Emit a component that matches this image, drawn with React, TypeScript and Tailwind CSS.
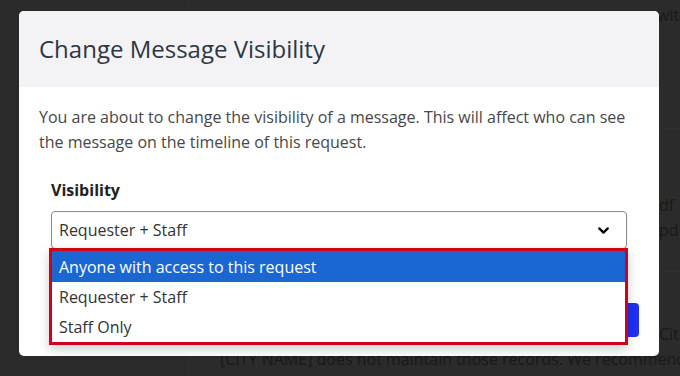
import { ChevronDown } from 'lucide-react';

const options = ['Anyone with access to this request', 'Requester + Staff', 'Staff Only'];

export default function App() {
  return (
    <div className="relative h-[376px] w-[680px] overflow-hidden bg-[#2b2b2b] font-['Open_Sans',sans-serif]">
      {/* page behind the dialog */}
      <div className="flex h-full">
        <div className="w-[186px] shrink-0 border-r border-[#262626] bg-[#2a2a2a]" />
        <div className="flex-1 text-[16px] leading-[25px] text-[#191919]">
          <div className="pl-[471px] pt-[3px] whitespace-nowrap">with</div>
          <div className="mt-[100px] border-t border-[#2f2f2f]" />
          <div className="mt-[64px] pl-[473px] whitespace-nowrap">df</div>
          <div className="pl-[473px] whitespace-nowrap">pd</div>
          <div className="mt-[28px] border-t border-[#2f2f2f]" />
          <div className="mt-[50px] pl-[473px] whitespace-nowrap">Cit</div>
          <div className="pl-[34px] whitespace-nowrap">[CITY NAME] does not maintain those records. We recommend</div>
        </div>
      </div>

      {/* dialog */}
      <div className="absolute left-[19px] top-[11px] flex h-[345px] w-[640px] flex-col rounded-[5px] bg-white">
        <div className="flex h-[76px] items-center rounded-t-[5px] bg-[#f3f3f5] px-[20px]">
          <h2 className="text-[24px] leading-[32px] text-[#2e3643]">Change Message Visibility</h2>
        </div>
        <div className="px-[20px] pt-[18px]">
          <p className="text-[16px] leading-[25px] text-[#474747]">
            You are about to change the visibility of a message. This will affect who can see the message on the
            timeline of this request.
          </p>
          <div className="mt-[24px] px-[12px]">
            <label className="block text-[16px] font-bold leading-[22px] text-[#222]">Visibility</label>
            <div className="relative mt-[10px]">
              <div className="flex h-[38px] items-center justify-between rounded-[4px] border border-[#8c8c8c] pl-[7px] pr-[14px] shadow-[0_1px_2px_rgba(0,0,0,0.12)]">
                <span className="text-[16px] text-[#333]">Requester + Staff</span>
                <ChevronDown size={17} strokeWidth={3.2} className="text-black" />
              </div>
              <ul className="absolute left-[-2px] right-[-1px] top-[37px] z-10 border-[3px] border-[#d0021b] bg-white shadow-[0_4px_10px_rgba(0,0,0,0.2)]">
                {options.map((o, i) => (
                  <li
                    key={o}
                    className={
                      i === 0
                        ? 'flex h-[31px] items-center bg-[#1a66d2] pl-[7px] text-[16px] text-white'
                        : 'flex h-[30px] items-center pl-[7px] text-[16px] text-[#333]'
                    }
                  >
                    {o}
                  </li>
                ))}
              </ul>
            </div>
          </div>
          <div className="mt-[54px] flex justify-end">
            <button className="h-[34px] w-[90px] rounded-[4px] bg-[#1f2ff5] text-[15px] text-white">Save</button>
          </div>
        </div>
      </div>
    </div>
  );
}
